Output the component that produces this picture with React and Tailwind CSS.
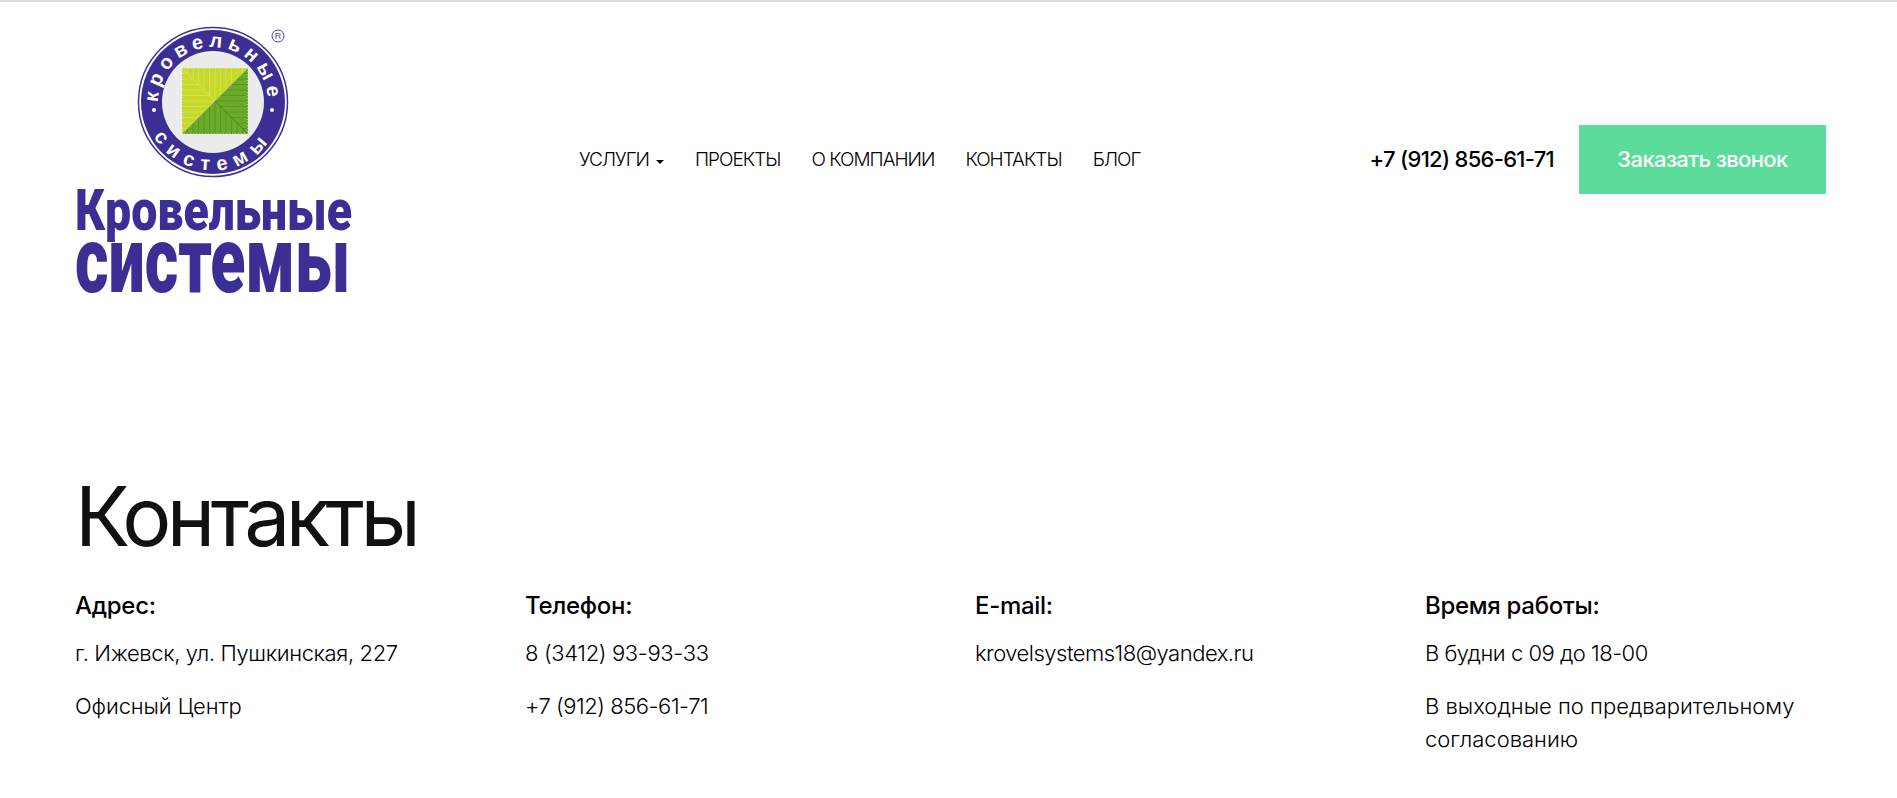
const NAV = ['ПРОЕКТЫ', 'О КОМПАНИИ', 'КОНТАКТЫ', 'БЛОГ']

const COLUMNS = [
  {
    title: 'Адрес:',
    lines: [
      { text: 'г. Ижевск, ул. Пушкинская, 227', cls: 'mt-[16px] tracking-[-0.38px]' },
      { text: 'Офисный Центр', cls: 'mt-[20px] tracking-[-0.1px]' },
    ],
  },
  {
    title: 'Телефон:',
    lines: [
      { text: '8 (3412) 93-93-33', cls: 'mt-[16px] tracking-[-0.35px]' },
      { text: '+7 (912) 856-61-71', cls: 'mt-[20px] tracking-[-0.45px]' },
    ],
  },
  {
    title: 'E-mail:',
    lines: [{ text: 'krovelsystems18@yandex.ru', cls: 'mt-[16px] tracking-[-0.5px]' }],
  },
  {
    title: 'Время работы:',
    lines: [
      { text: 'В будни с 09 до 18-00', cls: 'mt-[16px] tracking-[-0.5px]' },
      { text: 'В выходные по предварительному согласованию', cls: 'mt-[20px] tracking-[0px]' },
    ],
  },
]

function Logo() {
  const stripes = []
  for (let i = 1; i < 12; i++) stripes.push(i * 5.5)
  return (
    <svg width="290" height="280" viewBox="0 0 290 280" className="block">
      <defs>
        <path id="arcTop" d="M 83.8 91.6 A 55 55 0 1 1 192.2 91.6" />
        <path id="arcBottom" d="M 69.5 82 A 68.5 68.5 0 0 0 206.5 82" />
      </defs>
      {/* circle badge */}
      <circle cx="138" cy="82" r="74.5" fill="none" stroke="#3b2f96" strokeWidth="1.5" />
      <circle cx="138" cy="82" r="72" fill="#3b2f96" />
      <circle cx="138" cy="82" r="51" fill="#ebeceb" />
      <text fill="#ffffff" fontFamily="Liberation Sans, sans-serif" fontWeight="700" fontSize="20" letterSpacing="5">
        <textPath href="#arcTop" startOffset="50%" textAnchor="middle">кровельные</textPath>
      </text>
      <text fill="#ffffff" fontFamily="Liberation Sans, sans-serif" fontWeight="700" fontSize="20" letterSpacing="8">
        <textPath href="#arcBottom" startOffset="50%" textAnchor="middle">системы</textPath>
      </text>
      <circle cx="79" cy="90" r="2" fill="#ffffff" />
      <circle cx="197" cy="90" r="2" fill="#ffffff" />
      {/* green square */}
      <polygon points="107,48 173,48 107,114" fill="#c5da2c" />
      <polygon points="173,48 173,114 107,114" fill="#6cab2a" />
      {stripes.map((d) => {
        const run = Math.min(d, 66 - d)
        return (
          <g key={d} strokeWidth="0.7">
            <line x1={107 + d} y1="48" x2={107 + d} y2={48 + run} stroke="#d6e45f" />
            <line x1="107" y1={48 + d} x2={107 + run} y2={48 + d} stroke="#d6e45f" />
            <line x1={107 + d} y1="114" x2={107 + d} y2={114 - run} stroke="#4f8f22" />
            <line x1="173" y1={48 + d} x2={173 - run} y2={48 + d} stroke="#4f8f22" />
          </g>
        )
      })}
      <line x1="107" y1="48" x2="140" y2="81" stroke="#d6e45f" strokeWidth="0.7" />
      <line x1="140" y1="81" x2="173" y2="114" stroke="#3f7c1a" strokeWidth="0.7" />
      <rect x="107" y="48" width="66" height="66" fill="none" stroke="#ebeceb" strokeWidth="1" strokeDasharray="1 2" />
      {/* registered mark */}
      <circle cx="203" cy="16" r="6" fill="none" stroke="#4d44a0" strokeWidth="1" />
      <text x="203" y="19.2" textAnchor="middle" fill="#4d44a0" fontFamily="Liberation Sans, sans-serif" fontSize="9">R</text>
      {/* wordmark */}
      <text transform="translate(0 210) scale(1 1.16)" fill="#3b2f96" fontFamily="Roboto, sans-serif" fontWeight="900" fontSize="50" textLength="277" lengthAdjust="spacingAndGlyphs">Кровельные</text>
      <text transform="translate(0 272) scale(1 1.55)" fill="#3b2f96" fontFamily="Roboto, sans-serif" fontWeight="900" fontSize="60" textLength="275" lengthAdjust="spacingAndGlyphs">системы</text>
    </svg>
  )
}

export default function App() {
  return (
    <div className="min-h-[798px] bg-white border-t-2 border-[#dcdcdc] font-['Inter',sans-serif] text-[#111111]">
      {/* HEADER */}
      <header className="flex items-start pl-[75px] pr-[71px] pt-[18px]">
        <div className="w-[504px] shrink-0">
          <Logo />
        </div>
        <nav className="flex items-center gap-[31px] mt-[128px] text-[19px] font-light leading-[24px] tracking-[-1px] text-black">
          <a className="flex items-center gap-[7px]">
            УСЛУГИ
            <span className="mt-[3px] border-x-[4px] border-t-[4px] border-x-transparent border-t-black" />
          </a>
          {NAV.map((item) => (
            <a key={item}>{item}</a>
          ))}
        </nav>
        <div className="ml-auto flex items-center gap-[25px] mt-[105px]">
          <span className="text-[22px] font-medium tracking-[-0.7px] text-black">+7 (912) 856-61-71</span>
          <button className="w-[247px] h-[69px] bg-[#5cdc9a] text-white text-[22px] font-medium tracking-[-0.6px]">Заказать звонок</button>
        </div>
      </header>

      {/* CONTACTS */}
      <section className="pl-[75px] mt-[169px]">
        <h1 className="text-[82px] font-normal leading-[96px] tracking-[-4.6px] text-[#111111]">Контакты</h1>
        <div className="grid grid-cols-[repeat(4,450px)] mt-[26px]">
          {COLUMNS.map((col) => (
            <div key={col.title} className="w-[400px]">
              <h3 className="text-[24px] font-[450] leading-[30px] tracking-[-0.3px] text-black">{col.title}</h3>
              {col.lines.map((line) => (
                <p key={line.text} className={`text-[22px] font-light leading-[33px] text-black ${line.cls}`}>{line.text}</p>
              ))}
            </div>
          ))}
        </div>
      </section>
    </div>
  )
}
